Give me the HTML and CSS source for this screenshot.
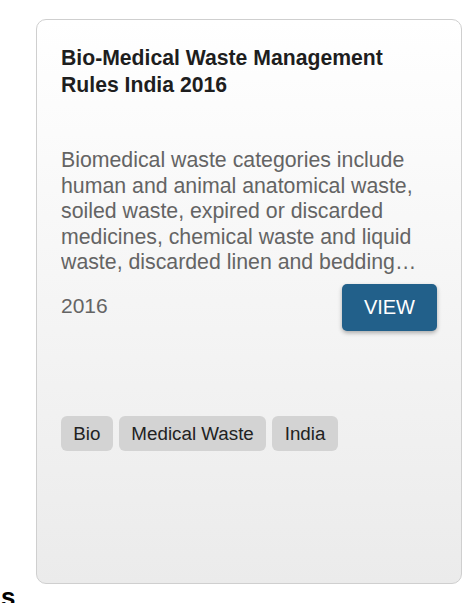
FILE: index.html
```html
<!DOCTYPE html>
<html lang="en">
<head>
<meta charset="utf-8">
<title>Bio-Medical Waste Management Rules India 2016</title>
<link rel="stylesheet" href="styles.css">
</head>
<body>
<div class="page">
  <article class="card">
    <h2 class="card-title">Bio-Medical Waste Management Rules India 2016</h2>
    <p class="card-desc">Biomedical waste categories include human and animal anatomical waste, soiled waste, expired or discarded medicines, chemical waste and liquid waste, discarded linen and bedding from hospitals and other healthcare facilities.</p>
    <div class="card-row">
      <span class="card-year">2016</span>
      <button class="btn-view" type="button">VIEW</button>
    </div>
    <ul class="tags">
      <li class="tag">Bio</li>
      <li class="tag">Medical Waste</li>
      <li class="tag">India</li>
    </ul>
  </article>
  <div class="next-heading">s</div>
</div>
</body>
</html>
```

FILE: styles.css
```css
html, body {
  margin: 0;
  padding: 0;
  background: #ffffff;
}

body {
  font-family: "Liberation Sans", Arial, sans-serif;
  color: #222;
}

.page {
  padding-top: 19px;
}

.card {
  box-sizing: border-box;
  width: 426px;
  height: 565px;
  margin-left: 36px;
  padding: 24px;
  border: 1px solid #cfcfcf;
  border-radius: 10px;
  background: linear-gradient(to bottom, #ffffff 0%, #f6f6f6 45%, #ebebeb 100%);
}

.card-title {
  margin: 0;
  font-size: 21.2px;
  line-height: 27px;
  font-weight: bold;
  color: #1e1e1e;
}

.card-desc {
  margin: 50px 0 0;
  font-size: 21.3px;
  line-height: 25.5px;
  color: #646464;
  display: -webkit-box;
  -webkit-box-orient: vertical;
  -webkit-line-clamp: 5;
  overflow: hidden;
}

.card-row {
  margin-top: 8px;
  display: flex;
  align-items: center;
  justify-content: space-between;
}

.card-year {
  font-size: 21px;
  line-height: 22px;
  color: #646464;
  padding-bottom: 3px;
}

.btn-view {
  font-family: inherit;
  font-size: 20px;
  line-height: 23px;
  padding: 12px 22px;
  border: 0;
  border-radius: 5px;
  background: #22608a;
  color: #ffffff;
  box-shadow: 0 2px 4px rgba(0, 0, 0, 0.3);
  cursor: pointer;
}

.tags {
  list-style: none;
  margin: 85px 0 0;
  padding: 0;
  display: flex;
  gap: 6.3px;
}

.tag {
  font-size: 18.8px;
  line-height: 23px;
  padding: 6px 12.3px;
  border-radius: 6px;
  background: #d3d3d3;
  color: #222;
}

.next-heading {
  margin-top: -2px;
  margin-left: 1px;
  font-size: 26px;
  line-height: 30px;
  font-weight: bold;
  color: #000;
}
```
